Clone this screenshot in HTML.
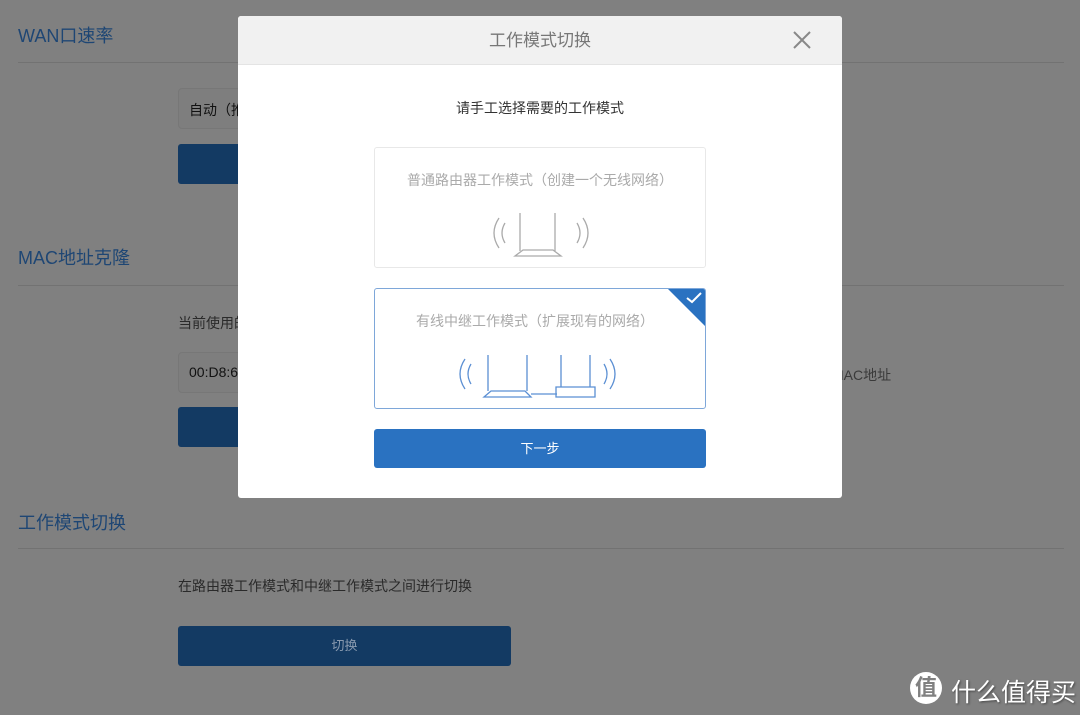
<!DOCTYPE html>
<html><head><meta charset="utf-8"><style>
*{margin:0;padding:0;box-sizing:border-box}
body{width:1080px;height:715px;overflow:hidden;background:#808080;font-family:"Liberation Sans","Noto Sans CJK SC",sans-serif;position:relative}
.a{position:absolute;white-space:nowrap}
.h{color:#1e4674;font-size:18px}
.ln{position:absolute;left:18px;width:1046px;height:1px;background:#727272}
.inp{position:absolute;left:178px;width:120px;height:41px;border:1px solid #777;border-radius:4px;background:#7e7e7e;font-size:14px;color:#111;padding:11px 10px}
.btn{position:absolute;left:178px;height:40px;background:#133a63;border-radius:3px}
.t{font-size:14px;color:#2a2a2a}
</style></head><body>
<div class="a h" style="left:18px;top:22px">WAN口速率</div>
<div class="ln" style="top:62px"></div>
<div class="inp" style="top:88px">自动（推</div>
<div class="btn" style="top:144px;width:100px"></div>
<div class="a h" style="left:18px;top:244px">MAC地址克隆</div>
<div class="ln" style="top:285px"></div>
<div class="a t" style="left:178px;top:313px">当前使用的</div>
<div class="inp" style="top:352px">00:D8:6</div>
<div class="btn" style="top:407px;width:100px"></div>
<div class="a t" style="left:832px;top:365px;color:#3a3a3a">MAC地址</div>
<div class="a h" style="left:18px;top:509px">工作模式切换</div>
<div class="ln" style="top:548px"></div>
<div class="a t" style="left:178px;top:576px">在路由器工作模式和中继工作模式之间进行切换</div>
<div class="btn" style="top:626px;width:333px;color:#8a9bb0;font-size:13px;text-align:center;line-height:40px">切换</div>
<div class="a" style="left:910px;top:672px;width:32px;height:32px;border-radius:50%;background:#fff;color:#808080;font-size:22px;text-align:center;line-height:32px;font-weight:bold">值</div>
<div class="a" style="left:951px;top:673px;color:#fff;font-size:25px;text-shadow:1px 1px 2px #444">什么值得买</div>

<div class="a" style="left:238px;top:16px;width:604px;height:482px;background:#fff;border-radius:3px;overflow:hidden">
 <div style="height:49px;background:#f1f1f1;border-bottom:1px solid #e4e4e4;text-align:center;line-height:49px;font-size:17px;color:#777">工作模式切换</div>
 <svg class="a" style="left:554px;top:14px" width="20" height="20"><path d="M2 2L18 18M18 2L2 18" stroke="#888" stroke-width="2"/></svg>
 <div class="a" style="left:0;width:604px;top:82px;text-align:center;font-size:14px;color:#333">请手工选择需要的工作模式</div>
 <div class="a" style="left:136px;top:131px;width:332px;height:121px;border:1px solid #e8e8e8;border-radius:3px">
  <div style="text-align:center;margin-top:22px;font-size:14px;color:#aaa">普通路由器工作模式（创建一个无线网络）</div>
  <svg class="a" style="left:110px;top:60px" width="110" height="50" fill="none" stroke="#aaa" stroke-width="1.3">
   <path d="M14 10Q4 25 14 40M20 15Q14 25 20 35M98 10Q108 25 98 40M92 15Q98 25 92 35"/>
   <path d="M35 5V43M70 5V43M30 48L38 42H68L76 48Z"/>
  </svg>
 </div>
 <div class="a" style="left:136px;top:272px;width:332px;height:121px;border:1px solid #7ea7d9;border-radius:3px;overflow:hidden">
  <div class="a" style="right:0;top:0;width:0;height:0;border-top:37px solid #2a72c1;border-left:37px solid transparent"></div>
  <svg class="a" style="right:3px;top:3px" width="16" height="12"><path d="M1 6L6 10L15 1" stroke="#fff" stroke-width="2" fill="none"/></svg>
  <div style="text-align:center;margin-top:22px;font-size:14px;color:#aaa;padding-right:10px">有线中继工作模式（扩展现有的网络）</div>
  <svg class="a" style="left:80px;top:60px" width="170" height="50" fill="none" stroke="#5b8fd3" stroke-width="1.3">
   <path d="M10 10Q0 25 10 40M16 15Q10 25 16 35M155 10Q165 25 155 40M149 15Q155 25 149 35"/>
   <path d="M33 6V42M72 6V42M29 48L36 42H70L76 48ZM76 45H102M101 38H140V48H101ZM106 6V38M135 6V38"/>
  </svg>
 </div>
 <div class="a" style="left:136px;top:413px;width:332px;height:39px;background:#2a72c1;border-radius:3px;color:#fff;font-size:13px;text-align:center;line-height:39px">下一步</div>
</div>
</body></html>
